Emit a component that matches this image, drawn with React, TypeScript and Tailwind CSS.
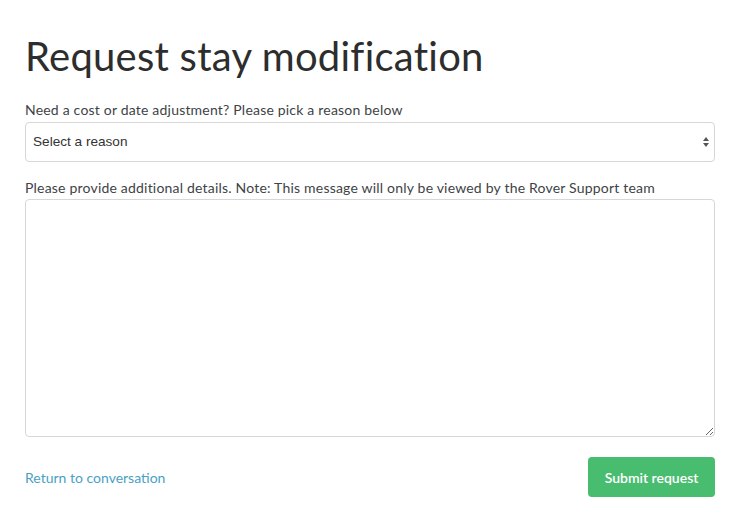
import React from "react";

export default function App() {
  return (
    <div className="w-[740px] h-[525px] bg-white px-[25px] pt-[28px] text-[#404347]" style={{ fontFamily: "Lato, 'Noto Sans', sans-serif" }}>
      <h1 className="text-[40px] leading-[56px] text-[#2d2d2d] tracking-[0.25px]">Request stay modification</h1>
      <div className="mt-[16px] text-[14px] leading-[20px] tracking-[0.2px] text-[#404347]">Need a cost or date adjustment? Please pick a reason below</div>
      <div className="mt-[2px] relative h-[40px] w-[690px] rounded-[4px] border border-[#d7d7d7] flex items-center pl-[7px]">
        <span className="text-[13.6px] text-[#333]" style={{ fontFamily: "'Liberation Sans', Arial, sans-serif" }}>Select a reason</span>
        <svg className="absolute right-[4px] top-[13px]" width="8" height="12" viewBox="0 0 8 12">
          <path d="M4 1 L7 5 L1 5 Z" fill="#555" />
          <path d="M4 11 L7 7 L1 7 Z" fill="#555" />
        </svg>
      </div>
      <div className="mt-[16px] text-[14px] leading-[20px] tracking-[0.2px] text-[#404347]">Please provide additional details. Note: This message will only be viewed by the Rover Support team</div>
      <textarea className="mt-[1px] block w-[690px] h-[238px] rounded-[4px] border border-[#d7d7d7] outline-none" />
      <div className="mt-[20px] w-[690px] flex items-center justify-between">
        <a className="text-[14px] text-[#4a9fc4]">Return to conversation</a>
        <button className="h-[40px] w-[127px] rounded-[4px] bg-[#48bd6f] text-white text-[14px] font-semibold">Submit request</button>
      </div>
    </div>
  );
}
